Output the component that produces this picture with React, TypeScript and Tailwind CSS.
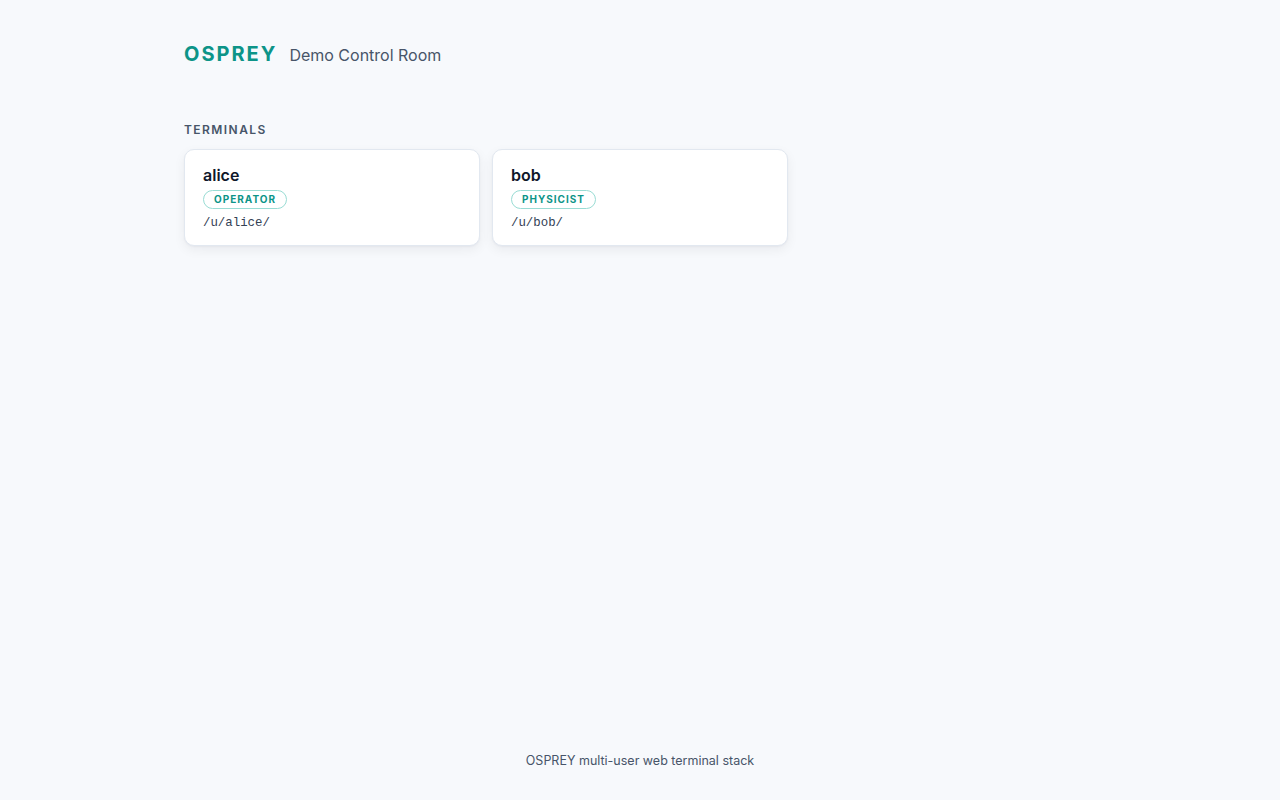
import React from "react";

type Terminal = { name: string; role: string; path: string };

const terminals: Terminal[] = [
  { name: "alice", role: "Operator", path: "/u/alice/" },
  { name: "bob", role: "Physicist", path: "/u/bob/" },
];

function TerminalCard({ t }: { t: Terminal }) {
  return (
    <a
      href={t.path}
      className="block rounded-[10px] border border-[#e2e8f0] bg-white px-[18px] pt-[14px] pb-[14px] shadow-[0_4px_12px_rgba(15,23,42,0.06),0_1px_2px_rgba(15,23,42,0.04)]"
    >
      <div className="text-[16px] leading-[22px] font-semibold text-[#0f172a]">{t.name}</div>
      <div className="mt-[4px] flex">
        <span className="inline-flex h-[19px] items-center rounded-full border border-[#99dcd4] px-[10px] text-[10px] font-bold uppercase tracking-[0.1em] text-[#0d9488]">
          {t.role}
        </span>
      </div>
      <div
        className="mt-[6px] text-[12.4px] leading-[16px] text-[#334155]"
        style={{ fontFamily: '"Liberation Mono", "DejaVu Sans Mono", monospace' }}
      >
        {t.path}
      </div>
    </a>
  );
}

export default function App() {
  return (
    <div
      className="flex min-h-screen flex-col bg-[#f7f9fc] text-[#0f172a]"
      style={{ fontFamily: 'Inter, "Noto Sans", sans-serif' }}
    >
      <main className="mx-auto w-[912px] flex-1 pt-10">
        <header className="flex items-baseline gap-3">
          <h1 className="text-[20px] leading-[28px] font-bold tracking-[0.1em] text-[#0d9488]">OSPREY</h1>
          <span className="text-[16px] text-[#475569]">Demo Control Room</span>
        </header>

        <section className="mt-[54px]">
          <h2 className="mb-[11px] text-[12px] leading-[16px] font-semibold uppercase tracking-[0.12em] text-[#475569]">
            Terminals
          </h2>
          <div className="grid grid-cols-3 gap-3">
            {terminals.map((t) => (
              <TerminalCard key={t.name} t={t} />
            ))}
          </div>
        </section>
      </main>

      <footer className="pb-[31px] text-center text-[12.5px] leading-[16px] text-[#475569]">
        OSPREY multi-user web terminal stack
      </footer>
    </div>
  );
}
